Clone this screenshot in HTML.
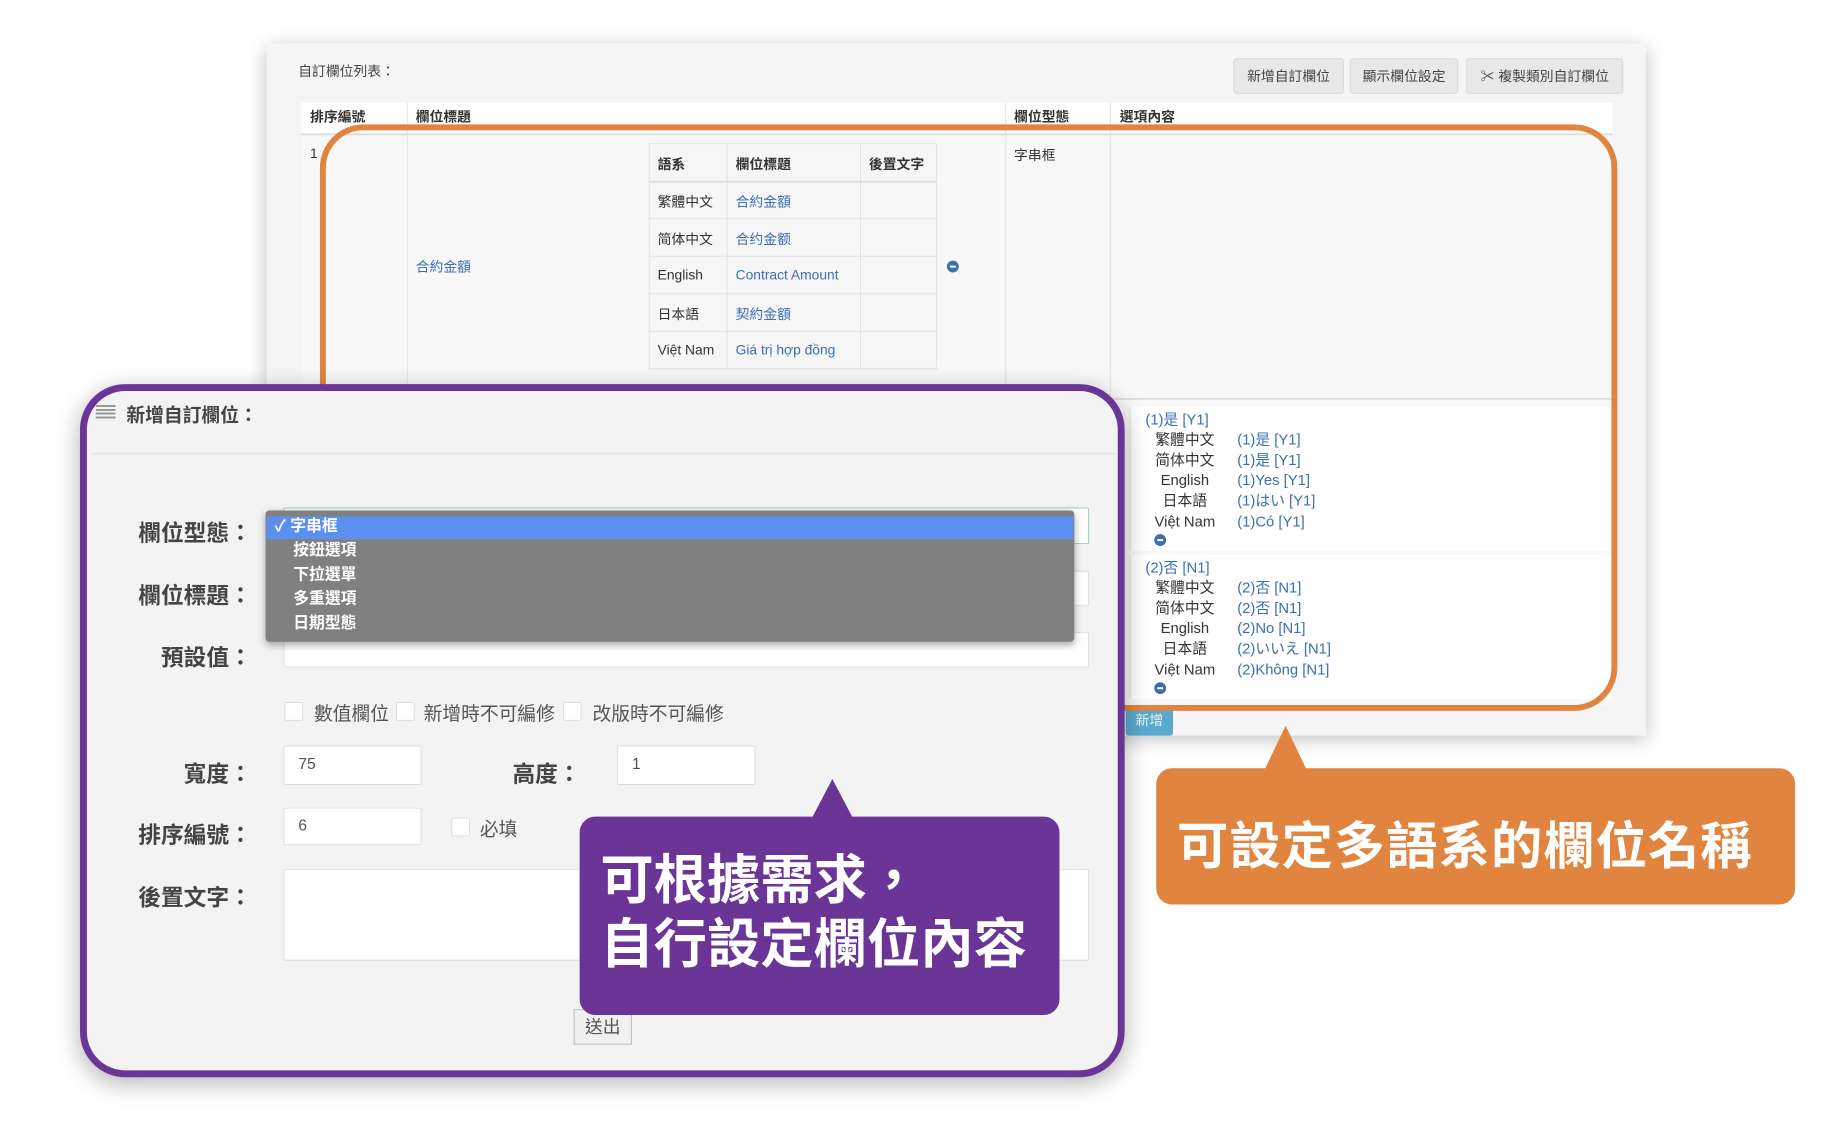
<!DOCTYPE html>
<html><head><meta charset="utf-8"><style>
*{margin:0;padding:0;box-sizing:border-box}
body{width:1838px;height:1122px;background:#fff;position:relative;overflow:hidden;font-family:"Liberation Sans","Noto Sans CJK TC",sans-serif;color:#333}
#w{position:absolute;left:0;top:0;width:1862px;height:1137px;transform:scale(0.9874);transform-origin:0 0}
.a{position:absolute}
.t{font-size:14px;white-space:nowrap}
.lk{color:#3a6fb5}
.btn{position:absolute;top:59px;height:36px;background:#e8e8e8;border:1px solid #d8d8d8;border-radius:3px;font-size:14px;line-height:34px;text-align:center;color:#444}
.vl{position:absolute;width:1px;background:#e2e2e2}
.hl{position:absolute;height:1px;background:#e2e2e2}
.lab{position:absolute;right:1607px;font-size:23px;font-weight:bold;color:#444;white-space:nowrap}
.inp{position:absolute;background:#fff;border:1px solid #ddd;border-radius:2px;font-size:16px;color:#555;padding-left:14px}
.cb{position:absolute;width:19px;height:19px;background:#fff;border:1px solid #ddd;border-radius:2px}
.cl{position:absolute;font-size:19px;color:#555;white-space:nowrap}
.opt{font-size:15px;white-space:nowrap;line-height:20.7px}
</style></head><body><div id="w">
<!-- back panel -->
<div class="a" style="left:270px;top:44px;width:1397px;height:701px;background:#f5f5f5;box-shadow:0 4px 18px rgba(0,0,0,.25)"></div>
<div class="a t" style="left:302px;top:62px;color:#444">自訂欄位列表：</div>
<div class="btn" style="left:1249px;width:112px">新增自訂欄位</div>
<div class="btn" style="left:1367px;width:110px">顯示欄位設定</div>
<div class="btn" style="left:1485px;width:159px">✂ 複製類別自訂欄位</div>
<div class="a" style="left:305px;top:104px;width:1328px;height:300px;background:#f8f8f8"></div>
<div class="a" style="left:305px;top:104px;width:1328px;height:32px;background:#fff"></div>
<div class="hl" style="left:305px;top:135px;width:1328px;background:#ddd;height:2px"></div>
<div class="vl" style="left:412px;top:104px;height:300px"></div>
<div class="vl" style="left:1018px;top:104px;height:641px"></div>
<div class="vl" style="left:1124px;top:104px;height:641px"></div>
<div class="a t" style="left:314px;top:108px;font-weight:bold">排序編號</div>
<div class="a t" style="left:421px;top:108px;font-weight:bold">欄位標題</div>
<div class="a t" style="left:1027px;top:108px;font-weight:bold">欄位型態</div>
<div class="a t" style="left:1134px;top:108px;font-weight:bold">選項內容</div>
<div class="a t" style="left:314px;top:147px">1</div>
<div class="a t lk" style="left:421px;top:260px">合約金額</div>
<div class="a t" style="left:1027px;top:147px">字串框</div>
<!-- inner table -->
<div class="a" style="left:657px;top:145px;width:292px;height:229px;background:#f6f6f6;border:1px solid #e2e2e2"></div>
<div class="vl" style="left:736px;top:145px;height:229px"></div>
<div class="vl" style="left:871px;top:145px;height:229px"></div>
<div class="hl" style="left:657px;top:183px;width:292px;height:2px;background:#ddd"></div>
<div class="hl" style="left:657px;top:221px;width:292px"></div>
<div class="hl" style="left:657px;top:259px;width:292px"></div>
<div class="hl" style="left:657px;top:297px;width:292px"></div>
<div class="hl" style="left:657px;top:335px;width:292px"></div>
<div class="a t" style="left:666px;top:156px;font-weight:bold">語系</div>
<div class="a t" style="left:745px;top:156px;font-weight:bold">欄位標題</div>
<div class="a t" style="left:880px;top:156px;font-weight:bold">後置文字</div>
<div class="a t" style="left:666px;top:194px">繁體中文</div><div class="a t lk" style="left:745px;top:194px">合約金額</div>
<div class="a t" style="left:666px;top:232px">简体中文</div><div class="a t lk" style="left:745px;top:232px">合约金额</div>
<div class="a t" style="left:666px;top:270px">English</div><div class="a t lk" style="left:745px;top:270px">Contract Amount</div>
<div class="a t" style="left:666px;top:308px">日本語</div><div class="a t lk" style="left:745px;top:308px">契約金額</div>
<div class="a t" style="left:666px;top:346px">Việt Nam</div><div class="a t lk" style="left:745px;top:346px">Giá trị hợp đồng</div>
<div class="a" style="left:959px;top:264px;width:12px;height:12px;border-radius:50%;background:#3d6fb0"><div class="a" style="left:3px;top:5px;width:6px;height:2px;background:#fff"></div></div>
<div class="hl" style="left:305px;top:403px;width:1328px;background:#ddd;height:2px"></div>
<!-- options -->
<div class="a" style="left:1124px;top:405px;width:509px;height:310px;background:#f8f8f8"></div>
<div class="a" style="left:1144px;top:412px;width:487px;height:146px;background:#fff;border-left:1px solid #e2e2e2"></div>
<div class="a" style="left:1144px;top:562px;width:487px;height:146px;background:#fff;border-left:1px solid #e2e2e2"></div>
<div class="a opt lk" style="left:1160px;top:416px">(1)是 [Y1]</div>
<div class="a opt" style="left:1160px;top:436px;width:80px;text-align:center">繁體中文<br>简体中文<br>English<br>日本語<br>Việt Nam</div>
<div class="a opt lk" style="left:1253px;top:436px">(1)是 [Y1]<br>(1)是 [Y1]<br>(1)Yes [Y1]<br>(1)はい [Y1]<br>(1)Có [Y1]</div>
<div class="a" style="left:1169px;top:541px;width:12px;height:12px;border-radius:50%;background:#3d6fb0"><div class="a" style="left:3px;top:5px;width:6px;height:2px;background:#fff"></div></div>
<div class="a opt lk" style="left:1160px;top:566px">(2)否 [N1]</div>
<div class="a opt" style="left:1160px;top:586px;width:80px;text-align:center">繁體中文<br>简体中文<br>English<br>日本語<br>Việt Nam</div>
<div class="a opt lk" style="left:1253px;top:586px">(2)否 [N1]<br>(2)否 [N1]<br>(2)No [N1]<br>(2)いいえ [N1]<br>(2)Không [N1]</div>
<div class="a" style="left:1169px;top:691px;width:12px;height:12px;border-radius:50%;background:#3d6fb0"><div class="a" style="left:3px;top:5px;width:6px;height:2px;background:#fff"></div></div>
<div class="a" style="left:1140px;top:714px;width:48px;height:31px;background:#5aa9cf;border-radius:3px;color:#eaf4fa;font-size:14px;line-height:31px;text-align:center">新增</div>
<!-- orange frame -->
<div class="a" style="left:324px;top:126px;width:1314px;height:594px;border:6px solid #e0843f;border-radius:44px"></div>
<!-- orange callout -->
<div class="a" style="left:1280px;top:735px;width:0;height:0;border-left:22px solid transparent;border-right:22px solid transparent;border-bottom:46px solid #e0843f"></div>
<div class="a" style="left:1171px;top:778px;width:647px;height:138px;background:#e0843f;border-radius:16px"></div>
<div class="a" style="left:1192px;top:815px;font-size:52px;font-weight:bold;color:#fff;white-space:nowrap;letter-spacing:1px">可設定多語系的欄位名稱</div>
<!-- purple panel -->
<div class="a" style="left:81px;top:389px;width:1058px;height:702px;background:#f3f3f3;border:7px solid #6a3596;border-radius:46px;box-shadow:0 6px 24px rgba(0,0,0,.3)"></div>
<div class="a" style="left:97px;top:410px;width:20px;height:16px;background:repeating-linear-gradient(#999 0 2px,transparent 2px 4px)"></div>
<div class="a" style="left:128px;top:406px;font-size:19px;font-weight:bold;color:#444">新增自訂欄位：</div>
<div class="hl" style="left:92px;top:459px;width:1038px;background:#e0e0e0"></div>
<div class="lab" style="top:521px">欄位型態：</div>
<div class="lab" style="top:584px">欄位標題：</div>
<div class="lab" style="top:647px">預設值：</div>
<div class="lab" style="top:765px">寬度：</div>
<div class="lab" style="top:827px">排序編號：</div>
<div class="lab" style="top:890px">後置文字：</div>
<div class="inp" style="left:287px;top:514px;width:816px;height:37px;border-color:#9cc"></div>
<div class="inp" style="left:287px;top:578px;width:816px;height:36px"></div>
<div class="inp" style="left:287px;top:640px;width:816px;height:36px"></div>
<div class="a" style="left:269px;top:517px;width:819px;height:133px;background:#808080;border-radius:4px;box-shadow:0 3px 8px rgba(0,0,0,.35)"></div>
<div class="a" style="left:270px;top:523px;width:817px;height:23px;background:#5b8ff0"></div>
<div class="a" style="left:278px;top:522px;font-size:16px;font-weight:bold;color:#fff;line-height:24px;white-space:nowrap">✓ 字串框</div>
<div class="a" style="left:297px;top:546px;font-size:16px;font-weight:bold;color:#fff;line-height:24.5px;white-space:nowrap">按鈕選項<br>下拉選單<br>多重選項<br>日期型態</div>
<div class="cb" style="left:288px;top:711px"></div><div class="cl" style="left:318px;top:708px">數值欄位</div>
<div class="cb" style="left:401px;top:711px"></div><div class="cl" style="left:429px;top:708px">新增時不可編修</div>
<div class="cb" style="left:570px;top:711px"></div><div class="cl" style="left:600px;top:708px">改版時不可編修</div>
<div class="inp" style="left:287px;top:755px;width:140px;height:40px;line-height:38px">75</div>
<div class="lab" style="top:765px;right:1274px">高度：</div>
<div class="inp" style="left:625px;top:755px;width:140px;height:40px;line-height:38px">1</div>
<div class="inp" style="left:287px;top:818px;width:140px;height:38px;line-height:36px">6</div>
<div class="cb" style="left:457px;top:828px"></div><div class="cl" style="left:486px;top:825px">必填</div>
<div class="inp" style="left:287px;top:880px;width:816px;height:93px"></div>
<div class="a" style="left:581px;top:1022px;width:59px;height:36px;background:#f0f0f0;border:1px solid #bbb;font-size:18px;line-height:34px;text-align:center;color:#555">送出</div>
<!-- purple callout -->
<div class="a" style="left:822px;top:789px;width:0;height:0;border-left:21px solid transparent;border-right:21px solid transparent;border-bottom:40px solid #6a3596"></div>
<div class="a" style="left:587px;top:827px;width:486px;height:201px;background:#6a3596;border-radius:16px"></div>
<div class="a" style="left:608px;top:860px;font-size:54px;font-weight:bold;color:#fff;line-height:65px;white-space:nowrap">可根據需求，<br>自行設定欄位內容</div>
</div></body></html>
